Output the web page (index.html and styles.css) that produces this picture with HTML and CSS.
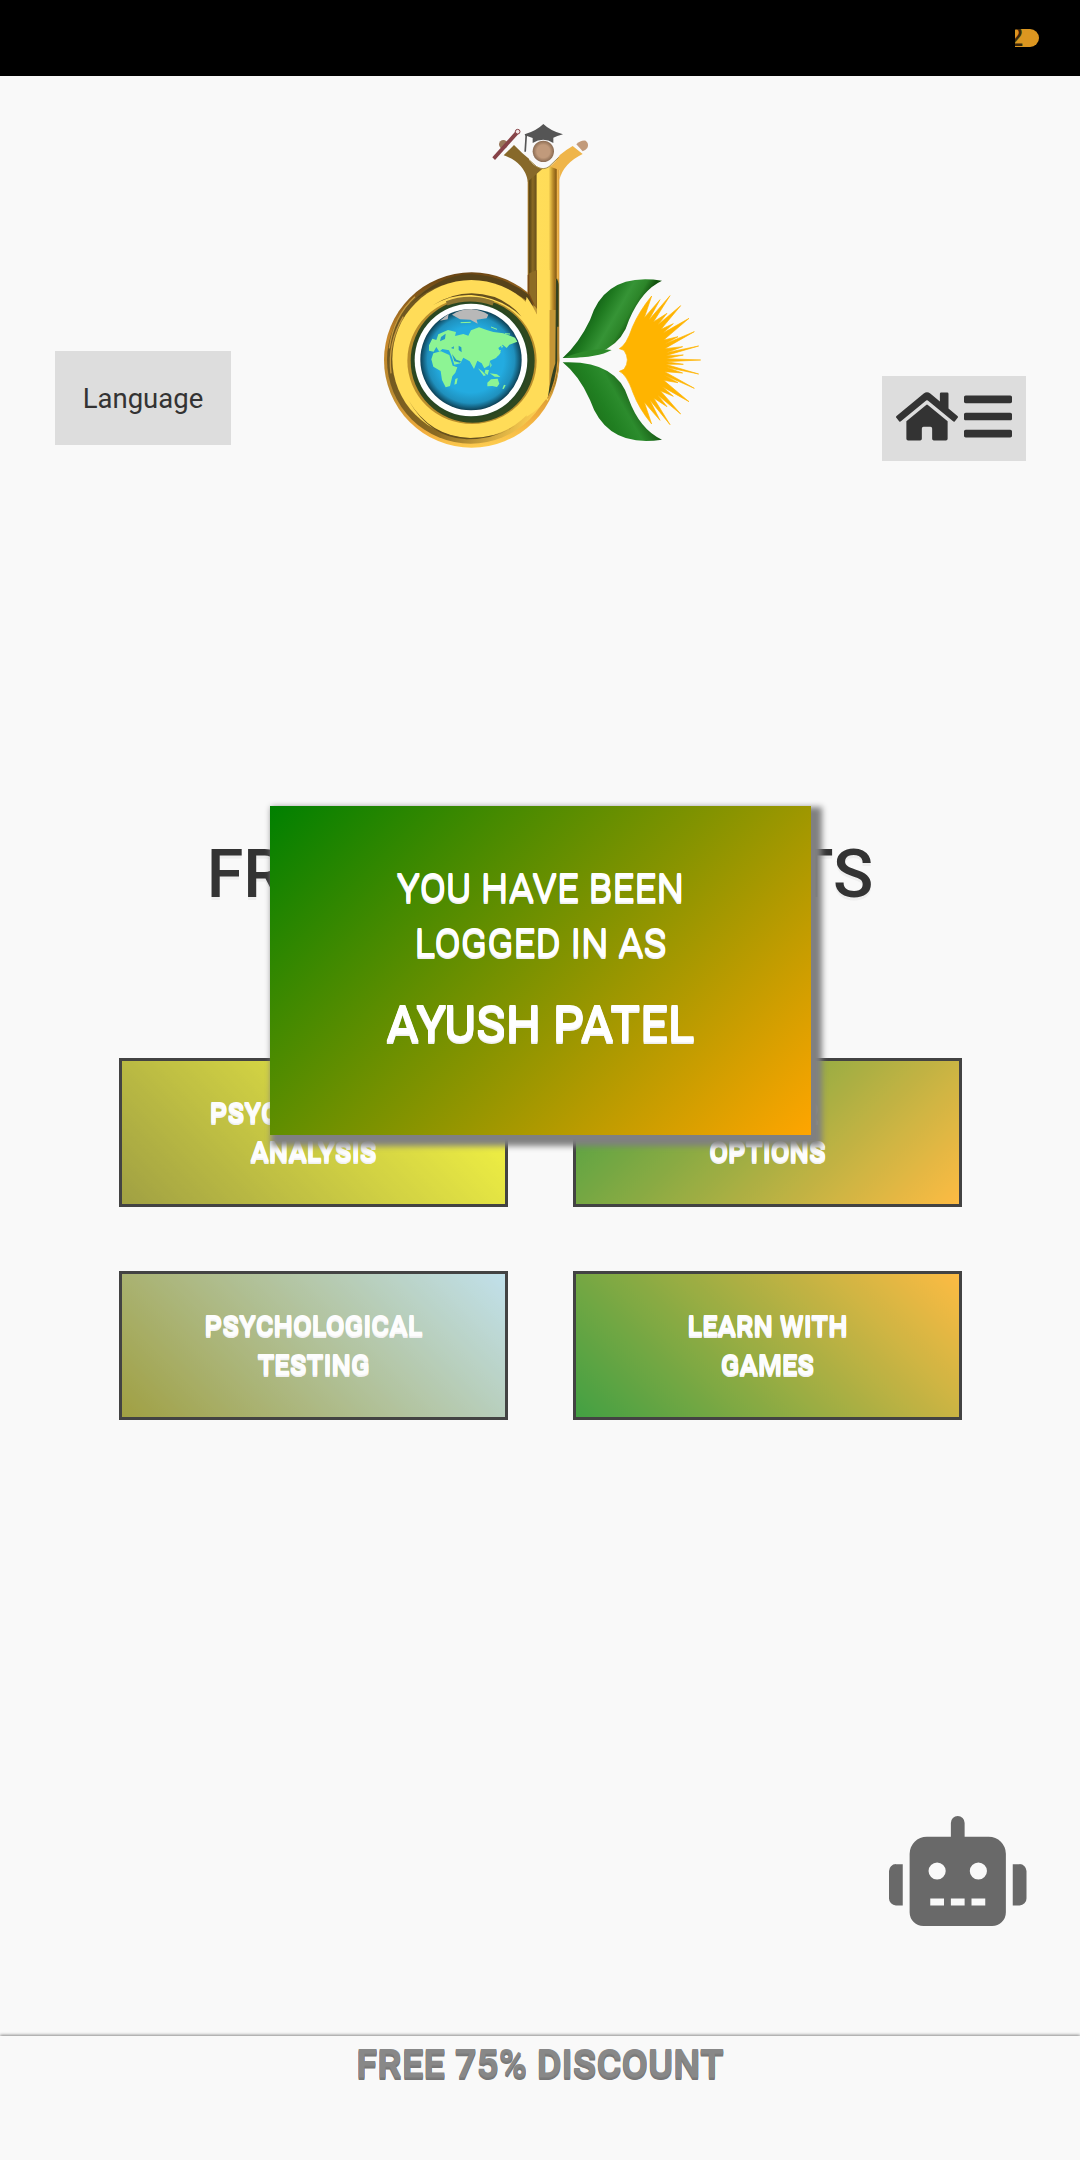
FILE: index.html
```html
<!DOCTYPE html>
<html lang="en">
<head>
<meta charset="utf-8">
<title>Home</title>
<link rel="stylesheet" href="styles.css">
</head>
<body>
<div class="topbar"><span class="badge">2</span></div>
<header class="header">
  <button class="language">Language</button>
  <svg class="logo" viewBox="0 0 1080 1050" aria-label="Logo">
    <defs>
      <linearGradient id="stem" x1="503" x2="598" y1="0" y2="0" gradientUnits="userSpaceOnUse">
        <stop offset="0" stop-color="#b7832a"/><stop offset=".06" stop-color="#5b4716"/><stop offset=".16" stop-color="#8a6a24"/><stop offset=".26" stop-color="#6d531c"/><stop offset=".31" stop-color="#ffdd59"/><stop offset=".66" stop-color="#ffdc58"/><stop offset=".8" stop-color="#b98a29"/><stop offset=".9" stop-color="#8a5d15"/><stop offset=".94" stop-color="#f0b64a"/><stop offset="1" stop-color="#d99a38"/>
      </linearGradient>
      <linearGradient id="rim" x1="330" x2="400" y1="487" y2="1014" gradientUnits="userSpaceOnUse">
        <stop offset="0" stop-color="#6a4513"/><stop offset=".3" stop-color="#c8892c"/><stop offset=".6" stop-color="#b98a30"/><stop offset=".85" stop-color="#f0ac3d"/><stop offset="1" stop-color="#ffd052"/>
      </linearGradient>
      <linearGradient id="shade" x1="80" x2="560" y1="650" y2="850" gradientUnits="userSpaceOnUse">
        <stop offset="0" stop-color="#6b5420"/><stop offset=".5" stop-color="#8a6a22"/><stop offset="1" stop-color="#ffd052"/>
      </linearGradient>
      <radialGradient id="sea"><stop offset=".65" stop-color="#23abe0"/><stop offset=".86" stop-color="#1f90bd"/><stop offset="1" stop-color="#0d4055"/></radialGradient>
      <radialGradient id="skin"><stop offset=".6" stop-color="#c19a7b"/><stop offset="1" stop-color="#8a6b52"/></radialGradient>
      <linearGradient id="leaf" x1="660" x2="800" y1="590" y2="670" gradientUnits="userSpaceOnUse">
        <stop offset=".1" stop-color="#0d5512"/><stop offset=".4" stop-color="#1f7a20"/><stop offset=".65" stop-color="#369436"/><stop offset=".85" stop-color="#2c8529"/><stop offset="1" stop-color="#12520e"/>
      </linearGradient>
      <linearGradient id="leaf2" x1="690" x2="830" y1="910" y2="830" gradientUnits="userSpaceOnUse">
        <stop offset="0" stop-color="#1d731b"/><stop offset=".3" stop-color="#218022"/><stop offset=".6" stop-color="#2c8c2d"/><stop offset=".85" stop-color="#1c641a"/><stop offset="1" stop-color="#0d4d0b"/>
      </linearGradient>
    </defs>
    <circle cx="335" cy="750" r="263" fill="url(#rim)"/>
    <path d="M503 150h95v600q-2 70-36 123L503 760z" fill="url(#stem)"/>
    <path d="M503 495V548L532 615V480z" fill="#7b4a15"/>
    <path d="M508 490V550L530 600V480z" fill="#8d6c25"/>
    <circle cx="332" cy="750" r="251" fill="url(#shade)"/>
    <path d="M155 580Q230 497 330 492Q430 496 505 553L522 590Q430 512 330 512Q225 514 155 580z" fill="#57431a"/>
    <path d="M88 715Q100 620 165 560M93 790Q82 700 130 620" fill="none" stroke="#c5983c" stroke-width="4"/>
    <circle cx="334" cy="747" r="237" fill="#ffdc58"/>
    <path d="M531 480H569V850Q545 895 500 920L470 720L500 560Q520 590 531 615z" fill="#ffdc58"/>
    <path d="M569 600H587V506h9V750Q594 815 568 862Z" fill="#c49636"/>
    <path d="M588 505Q596 510 596 530V750Q594 815 563 866Q572 800 586 760z" fill="#344120"/>
    <path d="M594 650V750Q590 815 563 866" fill="none" stroke="#d49736" stroke-width="4"/>
    <path d="M145 870Q210 980 330 984Q420 982 465 946Q410 987 320 988Q210 984 145 870z" fill="#65501e"/>
    <path d="M218 586Q275 550 335 550Q430 552 485 620Q425 563 335 555Q275 552 218 586z" fill="#65501e"/>
    <ellipse cx="336" cy="752" rx="194" ry="190" fill="#b98e2d"/>
    <ellipse cx="338" cy="752" rx="186" ry="186" fill="#2f4820"/>
    <circle cx="333" cy="750" r="175" fill="#284722"/>
    <path d="M260 580Q330 555 400 580" fill="none" stroke="#8c7432" stroke-width="14"/>
    <circle cx="333" cy="750" r="169" fill="#fff"/>
    <circle cx="333" cy="749" r="152" fill="url(#sea)"/>
    <path d="M276 614Q300 597 334 597Q365 600 385 614L380 625L350 629L353 641L331 629L300 628zM240 632L266 611L263 628z" fill="#b8b8b8"/>
    <g fill="#8df494">
      <path d="M207 706L217 686L229 690L235 673L264 660L288 666L285 678L310 672L325 677L333 661L357 652L380 660L400 666L430 670L465 683L472 695L448 704L440 714L428 704L415 714L422 728L408 744L390 752L388 766L373 775L365 760L352 752L342 777L329 754L310 743L301 760L283 764L276 742L267 721L247 717L238 725L229 711L221 725L207 722z"/>
      <path d="M220 730L243 724L268 735L278 767L292 772L286 788L277 799L270 828L257 832L246 810L242 783L220 770L214 748zM286 807l7-3-3 17-7 3z"/>
      <path d="M382 818L393 808L413 806L418 821L411 831L397 828L382 829zM354 775l12 8 12 13-7 2zM376 779l11 1-4 15-9-6zM389 790l22 3 10 8-17-1zM405 741l12-6 6-15-5 1-6 14-8 2zM391 756l4 10-4 7zM423 701l7 10-6 2zM432 824l5 2-6 11-4-1z"/>
    </g>
    <path d="M243 681l14-10-2 16-15 7zM273 714l9-5-1 8zM296 707l8 5 1 15-9-7zM276 732l13 17 14 5-3 4-17-4z" fill="#239ac8"/>
    <path d="M302 638l30-1M348 656l-7 8M393 651l18 7M435 671l15 1" stroke="#8df494" stroke-width="3"/>
    <path d="M503 210Q490 155 431 136L462 105Q510 155 550 174L503 215z" fill="#87692a"/>
    <path d="M598 210Q610 160 668 132L638 108Q600 130 565 168L598 180z" fill="#efb549"/>
    <path d="M508 150Q528 176 550 176Q575 175 598 137V110H505z" fill="#f9f9f9"/>
    <path d="M510 152L530 170Q550 182 567 170L596 142" fill="none" stroke="#a58b46" stroke-width="3"/>
    <circle cx="550" cy="124" r="32" fill="url(#skin)"/>
    <path d="M494 73Q530 62 550 42Q572 63 609 73Q590 78 580 83V99Q550 80 518 99V84L501 78L498 125H493L496 78z" fill="#555"/>
    <circle cx="430" cy="103" r="13" fill="#98775a"/>
    <path d="M397 142L470 60L478 69L405 150z" fill="#874348"/>
    <circle cx="473" cy="65" r="7" fill="#f4e6e6" stroke="#874348" stroke-width="3"/>
    <path d="M649 103Q662 90 677 92Q688 101 682 114Q676 121 668 124z" fill="#c29a7a"/>
    <path d="M608 744Q657 700 690 630Q735 485 906 512Q845 540 807 630Q775 745 608 744z" fill="url(#leaf)"/>
    <path d="M608 757Q657 796 690 870Q740 1015 906 989Q840 960 805 865Q770 750 608 757z" fill="url(#leaf2)"/>
    <path d="M610 743Q700 710 755 720Q710 745 610 743z" fill="#2d8a2a"/>
    <path d="M778 716Q799 706 817 652Q837 604 875 558L853 623L900 569L866 631L930 557L880 636L921 610L893 645L962 587L903 658L940 641L909 669L987 625L911 690L954 680L914 702L1003 665L914 716L968 710L918 728L1016 708L917 737L970 735L918 746L1022 750L918 755L970 763L917 763L1016 792L918 772L968 789L914 785L1003 835L912 795L954 818L911 811L987 875L907 830L940 859L901 842L962 912L893 855L921 890L881 864L930 944L869 869L900 931L853 877L875 942Q837 896 819 848Q800 793 778 784L792 778Q812 750 792 721z" fill="#ffb400" stroke="#ffb400" stroke-width="2"/>
  </svg>
  <nav class="menu">
    <svg class="home" viewBox="0 0 576 512"><path d="M280.37 148.26L96 300.11V464a16 16 0 0 0 16 16l112.06-.29a16 16 0 0 0 15.92-16V368a16 16 0 0 1 16-16h64a16 16 0 0 1 16 16v95.64a16 16 0 0 0 16 16.05L464 480a16 16 0 0 0 16-16V300L295.67 148.26a12.19 12.19 0 0 0-15.3 0zM571.6 251.47L488 182.56V44.05a12 12 0 0 0-12-12h-56a12 12 0 0 0-12 12v72.61L318.47 43a48 48 0 0 0-61 0L4.34 251.47a12 12 0 0 0-1.6 16.9l25.5 31A12 12 0 0 0 45.15 301l235.22-193.74a12.19 12.19 0 0 1 15.3 0L530.9 301a12 12 0 0 0 16.9-1.6l25.5-31a12 12 0 0 0-1.7-16.93z"/></svg>
    <svg class="bars" viewBox="0 0 448 512"><path d="M16 132h416c8.837 0 16-7.163 16-16V76c0-8.837-7.163-16-16-16H16C7.163 60 0 67.163 0 76v40c0 8.837 7.163 16 16 16zm0 160h416c8.837 0 16-7.163 16-16v-40c0-8.837-7.163-16-16-16H16c-8.837 0-16 7.163-16 16v40c0 8.837 7.163 16 16 16zm0 160h416c8.837 0 16-7.163 16-16v-40c0-8.837-7.163-16-16-16H16c-8.837 0-16 7.163-16 16v40c0 8.837 7.163 16 16 16z"/></svg>
  </nav>
</header>
<main class="content">
  <h1 class="title">FREE CAREER POINTS</h1>
  <div class="cards">
    <a class="card yellow">PSYCHOMETRIC<br>ANALYSIS</a>
    <a class="card green-down">CAREER<br>OPTIONS</a>
    <a class="card blue">PSYCHOLOGICAL<br>TESTING</a>
    <a class="card green-up">LEARN WITH<br>GAMES</a>
  </div>
</main>
<footer class="footer">FREE 75% DISCOUNT</footer>
<svg class="robot" viewBox="0 0 640 512"><path d="M32,224H64V416H32A31.96,31.96,0,0,1,0,384V256A31.96,31.96,0,0,1,32,224Zm512-48V448a64.06,64.06,0,0,1-64,64H160a64.06,64.06,0,0,1-64-64V176a79.97,79.97,0,0,1,80-80H288V32a32,32,0,0,1,64,0V96H464A79.97,79.97,0,0,1,544,176ZM264,256a40,40,0,1,0-40,40A39.99,39.99,0,0,0,264,256Zm-8,128H192v32h64Zm96,0H288v32h64ZM456,256a40,40,0,1,0-40,40A39.99,39.99,0,0,0,456,256Zm-8,128H384v32h64ZM640,256V384a31.96,31.96,0,0,1-32,32H576V224h32A31.96,31.96,0,0,1,640,256Z"/></svg>
<div class="popup" role="dialog">
  <p class="popup-text">YOU HAVE BEEN<br>LOGGED IN AS</p>
  <p class="popup-name">AYUSH PATEL</p>
</div>
</body>
</html>
```
FILE: styles.css
```css
* { box-sizing: border-box; }
body {
  margin: 0;
  width: 1080px;
  height: 2160px;
  position: relative;
  display: flex;
  flex-direction: column;
  overflow: hidden;
  background: #f9f9f9;
  color: #333;
  font-family: Roboto, "Liberation Sans", sans-serif;
}
.topbar {
  height: 76px;
  flex: none;
  background: #000;
  display: flex;
  justify-content: flex-end;
  padding: 29px 41px 0 0;
}
.badge {
  width: 24px;
  height: 18px;
  border-radius: 0 9px 9px 0;
  background: #dc9620;
  color: #3b270a;
  font-size: 25px;
  font-weight: 500;
  line-height: 18px;
  text-indent: -6px;
  overflow: hidden;
}
.header {
  height: 416px;
  flex: none;
  display: flex;
  justify-content: space-between;
  align-items: flex-start;
  padding: 34px 54px 0 55px;
}
.language {
  width: 176px;
  height: 94px;
  margin-top: 241px;
  padding: 1px 0 0;
  border: 0;
  background: #ddd;
  color: #333;
  font: 400 27.5px/93px Roboto, sans-serif;
}
.logo { width: 360px; height: 350px; margin-left: -33px; }
.menu {
  width: 144px;
  height: 85px;
  margin-top: 266px;
  padding: 13px 0 0 13px;
  background: #ddd;
  display: flex;
  gap: 6px;
  fill: #333;
}
.home { width: 62px; height: 55px; margin-left: 1px; }
.bars { width: 48px; height: 55px; }
.content { flex: 1; padding-top: 342px; }
.title {
  margin: 0;
  font-size: 66.5px;
  line-height: 80px;
  font-weight: 500;
  text-align: center;
  white-space: nowrap;
  text-shadow: 0 3px 0 #eee;
}
.cards {
  display: grid;
  grid-template-columns: 389px 389px;
  gap: 64px 65px;
  justify-content: center;
  margin-top: 144px;
  padding-left: 1px;
}
.card {
  height: 149px;
  border: 3px solid #000;
  padding-top: 33px;
  opacity: .73;
  color: #fff;
  font-size: 27.4px;
  line-height: 39px;
  font-weight: 700;
  text-align: center;
  text-shadow: 0 1px 0 #fff, 0 2px 0 #f4f4f4, 0 3px 0 #eee;
}
.yellow { background: linear-gradient(45deg, olive, yellow); }
.green-down { background: linear-gradient(135deg, green, orange); }
.blue { background: linear-gradient(45deg, olive, lightblue); }
.green-up { background: linear-gradient(45deg, green, orange); }
.footer {
  height: 124px;
  flex: none;
  padding-top: 4px;
  background: #f9f9f9;
  box-shadow: 0 -1px 3px #888;
  color: #888;
  font-size: 38.4px;
  line-height: 48px;
  font-weight: 700;
  text-align: center;
  text-shadow: 0 1px 0 #808080, 0 2px 0 #7a7a7a, 0 3px 0 #777;
}
.robot {
  position: absolute;
  left: 889px;
  top: 1815.5px;
  width: 137.5px;
  height: 110px;
  fill: #696969;
}
.popup {
  position: absolute;
  left: 270px;
  top: 806px;
  width: 541px;
  height: 329px;
  padding-top: 54px;
  background: linear-gradient(135deg, green, orange);
  box-shadow: 6px 6px 6px 5px gray;
  color: #fff;
  text-align: center;
  text-shadow: 0 1px 0 #fff, 0 2px 0 #f4f4f4, 0 3px 0 #eee;
}
.popup-text { margin: 0; font-size: 38.7px; line-height: 55px; }
.popup-name { margin: 14px 0 0; font-size: 49.2px; line-height: 80px; font-weight: 500; }
```
